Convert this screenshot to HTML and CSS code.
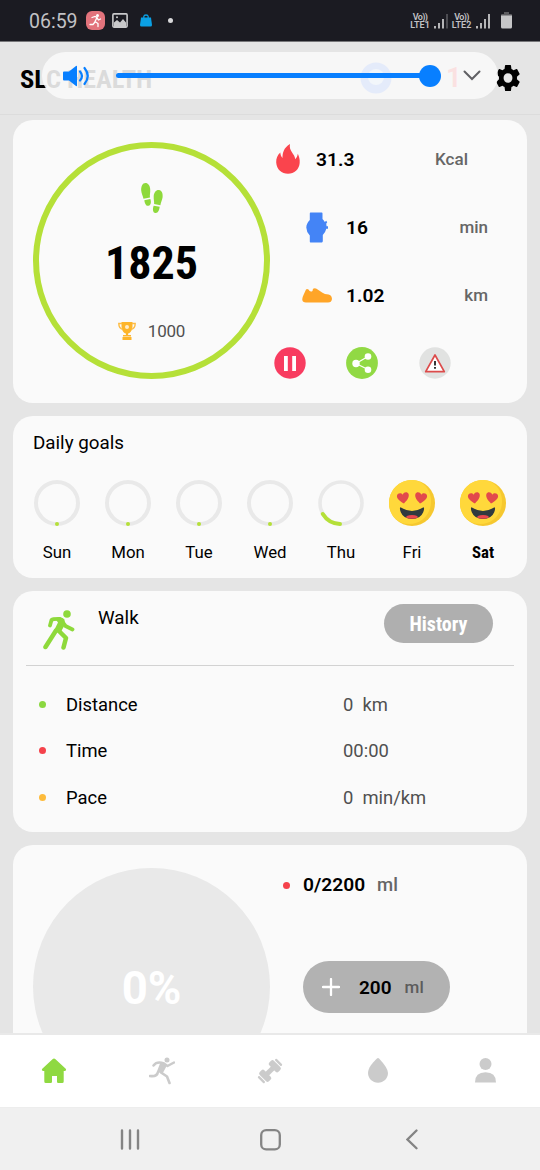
FILE: index.html
```html
<!DOCTYPE html>
<html lang="en">
<head>
<meta charset="utf-8">
<title>SLC Health</title>
<link rel="stylesheet" href="styles.css">
</head>
<body>
<div class="phone">
  <div class="status">
    <span class="clock">06:59</span>
    <svg class="status-app" width="19" height="19" viewBox="0 0 19 19"><rect width="19" height="19" rx="6" fill="#e2737c"/><circle cx="11.500" cy="4.500" r="1.500" fill="#fff"/><path d="M6 6.500l3-1 2 1-2 4 3 2v3M9 11l-2 2.500H4M11 7l1.500 2 2-1" fill="none" stroke="#fff" stroke-width="1.300" stroke-linecap="round"/></svg>
    <svg class="status-pic" width="16" height="15" viewBox="0 0 16 15"><rect x=".9" y=".9" width="14.200" height="13.200" rx="1" fill="none" stroke="#c9c9cb" stroke-width="1.600"/><path d="M2 14V9.500l3-2.500 3 2.500 3-3.500 3 3.500V14z" fill="#c9c9cb"/><circle cx="5" cy="4.300" r="1" fill="#c9c9cb"/></svg>
    <svg class="status-bag" width="12" height="13" viewBox="0 0 12 13"><path d="M1 3.500h10l1 7.500q0 1.500-1.500 1.500h-9Q0 12.500 0 11z" fill="#0ba0e4"/><path d="M3.800 4V2.500Q4 1 6 1t2.200 1.500V4" fill="none" stroke="#0ba0e4" stroke-width="1.300"/></svg>
    <span class="status-dot"></span>
    <span class="status-gap"></span>
    <span class="lte"><span class="vo">Vo))</span><span>LTE1</span></span>
    <svg class="bars" width="14" height="16" viewBox="0 0 14 16"><path d="M1 13v2.500M5 10v5.500M9 6v9.500" stroke="#d0d0d2" stroke-width="1.700"/><path d="M13 1v14.500" stroke="#55555b" stroke-width="1.700"/></svg>
    <span class="lte lte-two"><span class="vo">Vo))</span><span>LTE2</span></span>
    <svg class="bars" width="14" height="16" viewBox="0 0 14 16"><path d="M1 13v2.500M5 10v5.500M9 6v9.500M13 1v14.500" stroke="#d0d0d2" stroke-width="1.700"/></svg>
    <svg class="battery" width="11" height="17" viewBox="0 0 11 17"><path d="M3 0h5v2h2q1 0 1 1v2H0V3q0-1 1-1h2z" fill="#5c5c60"/><path d="M0 3.500h11V15q0 1.500-1.500 1.500h-8Q0 16.500 0 15z" fill="#c6c6c8"/></svg>
  </div>

  <div class="header">
    <span class="title narrow">SLC HEALTH</span>
    <span class="badge-blue"><svg width="32" height="32" viewBox="0 0 32 32"><circle cx="16" cy="16" r="15.500" fill="#4f83ff"/><circle cx="16" cy="15" r="8" fill="#b9d8ff"/></svg></span>
    <span class="badge-red">1</span>
    <svg class="gear" width="24" height="26" viewBox="2 2 20 20" preserveAspectRatio="none"><path d="M19.430 12.980c.04-.32.07-.64.07-.98s-.03-.66-.07-.98l2.110-1.650c.19-.15.24-.42.12-.64l-2-3.460c-.12-.22-.39-.3-.61-.22l-2.490 1c-.52-.4-1.080-.73-1.690-.98l-.38-2.650A.488.488 0 0014 2h-4c-.25 0-.46.18-.49.42l-.38 2.650c-.61.25-1.170.59-1.690.98l-2.490-1c-.23-.09-.49 0-.61.22l-2 3.460c-.13.22-.07.49.12.64l2.110 1.650c-.04.32-.07.65-.07.98s.03.66.07.98l-2.110 1.650c-.19.15-.24.42-.12.64l2 3.460c.12.22.39.3.61.22l2.490-1c.52.4 1.080.73 1.690.98l.38 2.650c.03.24.24.42.49.42h4c.25 0 .46-.18.49-.42l.38-2.650c.61-.25 1.170-.59 1.690-.98l2.490 1c.23.09.49 0 .61-.22l2-3.460c.12-.22.07-.49-.12-.64l-2.110-1.650zM12 15.700a3.700 3.700 0 110-7.400 3.700 3.700 0 010 7.400z"/></svg>
    <div class="volume">
      <svg class="speaker" width="27" height="22" viewBox="0 0 27 22"><path d="M1 6.500h5L13 1q1-.5 1 .5v19q0 1-1 .5L6 15.500H1q-1 0-1-1v-7q0-1 1-1z" fill="#087fff"/><path d="M17 6.500q4 4.500 0 9M21.500 3q6.500 8 0 16" fill="none" stroke="#087fff" stroke-width="2.200" stroke-linecap="round"/></svg>
      <div class="track"><span class="knob"></span></div>
      <svg class="chevron" width="18" height="11" viewBox="0 0 18 11"><path d="M1.500 1.500L9 9l7.500-7.500" fill="none" stroke="#606064" stroke-width="2" stroke-linecap="round"/></svg>
    </div>
  </div>

  <div class="content">
    <section class="card summary">
      <div class="ring">
        <svg class="steps" width="22" height="31" viewBox="0 0 22 31"><g fill="#8ed93b"><path d="M4.500 0C1.500 0 0 3.500.2 7.500c.2 3 1.500 5 2.300 8.300l6.500-1.300c-.5-2.500.5-5 .2-8.500C8.900 2.500 7 0 4.500 0z"/><path d="M3.300 17.200l6-1.200c1 2.500 1 6-1.800 6.800-2.500.6-3.800-2.600-4.200-5.600z"/><path d="M18 7c-3-.3-5 2.500-5.300 6-.2 3.500.7 5.500.4 8l6.300 1.200c.4-3 1.800-5 2.200-8C22 10.500 20.800 7.300 18 7z"/><path d="M12.700 22.700l6 1.100c-.4 3-1.500 6.500-4.300 6.200-2.900-.4-2.900-4.500-1.700-7.300z"/></g></svg>
        <span class="step-count narrow">1825</span>
        <span class="target"><svg width="18" height="18" viewBox="0 0 18 18"><path d="M3.500 0h11v4c0 4-2 7-4.400 7.400V13h2.900v1.500H5V13h2.900v-1.600C5.500 11 3.500 8 3.500 4zM4.500 15h9v3h-9z" fill="#fdb52b"/><path d="M4 1.500H.8Q.8 6.500 5 7.500M14 1.500h3.200q0 5-4.200 6" fill="none" stroke="#fdbc45" stroke-width="1.400"/><circle cx="9" cy="5" r="2" fill="#fff" opacity=".75"/></svg>1000</span>
      </div>
      <div class="metrics">
        <div class="metric metric-first"><span class="metric-icon"><svg width="24" height="30" viewBox="0 0 24 30"><path d="M14 0C7.500 4 6.500 9 6.500 14 5 12.500 4.500 10.500 4.300 8.500 1.500 11 0 14.500.2 18.500.7 25.500 5.700 29.800 12 29.800s11.200-4.300 11.700-11c.3-3.500-.7-6.500-1.900-9-.4 2.500-1.200 4-2.600 5.500C19 9.500 12.500 7.500 14 0z" fill="#fa444d"/></svg></span><b>31.3</b><em>Kcal</em></div>
        <div class="metric"><span class="metric-icon"><svg width="22" height="31" viewBox="0 0 22 31"><path d="M4.500.5h11.200q.8 0 .8 1V7q1.500 1.300 2.300 3l1.400-1.200 1 1.500-1 1.500q.3 1.300.3 2.500h1.500v2.400h-1.700q-.8 3.500-3.500 6.300v6q0 1-.9 1.500H4.500q-.7 0-.7-1v-6Q.3 19.500.3 15.500T3.800 8V1.500q0-1 .7-1z" fill="#4484f6"/></svg></span><b>16</b><em>min</em></div>
        <div class="metric"><span class="metric-icon"><svg width="30" height="15" viewBox="0 0 30 15"><path d="M4 1.500Q5 .3 6.500 1.500 8 4.500 10.500 3L11 .8q2-1 3.500 0l6 4q2 1.500 6 1.800 3 .3 3.500 4.400-.5 3.500-4 3.500H4Q.5 14.500.3 11.800 0 10 1.500 7z" fill="#ffa528"/></svg></span><b>1.02</b><em>km</em></div>
        <div class="actions">
          <svg width="32" height="32" viewBox="0 0 32 32"><circle cx="16" cy="16" r="15.700" fill="#f83c60"/><path d="M11.900 9v15M20.100 9v15" stroke="#fff" stroke-width="3.800"/></svg>
          <svg width="32" height="32" viewBox="0 0 32 32"><circle cx="16" cy="16" r="15.900" fill="#91d944"/><path d="M22 9.500L10 16.500l12 6" fill="none" stroke="#fff" stroke-width="1.200"/><g fill="#fff"><circle cx="22" cy="9.500" r="3.300"/><circle cx="10" cy="16.500" r="3.700"/><circle cx="22" cy="22.800" r="3.300"/></g></svg>
          <svg width="32" height="32" viewBox="0 0 32 32"><circle cx="16" cy="16" r="15.700" fill="#e1e2e1"/><path d="M16 8L25.300 24.700H6.700z" fill="#fff" stroke="#dc4b4b" stroke-width="1.700" stroke-linejoin="round"/><path d="M16 14v4.500M16 20v1.800" stroke="#222" stroke-width="1.800"/></svg>
        </div>
      </div>
    </section>

    <section class="card goals">
      <h2>Daily goals</h2>
      <div class="days">
        <div class="day"><span class="day-ring"></span>Sun</div>
        <div class="day"><span class="day-ring"></span>Mon</div>
        <div class="day"><span class="day-ring"></span>Tue</div>
        <div class="day"><span class="day-ring"></span>Wed</div>
        <div class="day"><svg width="46" height="46" viewBox="0 0 46 46"><circle cx="23" cy="23" r="21" fill="none" stroke="#e9e9e9" stroke-width="3.600"/><path d="M22 44A21 21 0 014.800 34" fill="none" stroke="#b5e038" stroke-width="4" stroke-linecap="round"/></svg>Thu</div>
        <div class="day"><svg width="46" height="46" viewBox="0 0 46 46"><circle cx="23" cy="23" r="23" fill="#f6c82f"/><path d="M23 0C10 0 0 10 0 23s9 21 20 21c13 0 22-10 22-23C42 12 37 4 29 1Q26 0 23 0z" fill="#ffd83b"/><path d="M15 23.400C11 21.500 7.300 18.500 8 15.500c.7-2.600 4-3.200 5.800-.8 1-3 4.800-3.200 5.800-.6 1 3-1.900 7-4.600 9.300z" fill="#e2494c"/><path d="M31 23.400c-2.700-2.300-5.600-6.300-4.600-9.300 1-2.600 4.800-2.400 5.800.6 1.800-2.400 5.100-1.800 5.800.8.700 3-3 6-7 7.900z" fill="#e2494c"/><path d="M11.500 27.300Q23 34.500 34.500 27.300q1.300 1-.3 5Q31.500 39 23 39t-11.200-6.700q-1.600-4-.3-5z" fill="#303a3f"/><path d="M17 37.500q0-2.500 6-2.500t6 2.500q-6 2.500-12 0z" fill="#e9474d"/></svg>Fri</div>
        <div class="day"><svg width="46" height="46" viewBox="0 0 46 46"><circle cx="23" cy="23" r="23" fill="#f6c82f"/><path d="M23 0C10 0 0 10 0 23s9 21 20 21c13 0 22-10 22-23C42 12 37 4 29 1Q26 0 23 0z" fill="#ffd83b"/><path d="M15 23.400C11 21.500 7.300 18.500 8 15.500c.7-2.600 4-3.200 5.800-.8 1-3 4.800-3.200 5.800-.6 1 3-1.900 7-4.600 9.300z" fill="#e2494c"/><path d="M31 23.400c-2.700-2.300-5.600-6.300-4.600-9.300 1-2.600 4.800-2.400 5.800.6 1.800-2.400 5.100-1.800 5.800.8.700 3-3 6-7 7.900z" fill="#e2494c"/><path d="M11.500 27.300Q23 34.500 34.500 27.300q1.300 1-.3 5Q31.500 39 23 39t-11.200-6.700q-1.600-4-.3-5z" fill="#303a3f"/><path d="M17 37.500q0-2.500 6-2.500t6 2.500q-6 2.500-12 0z" fill="#e9474d"/></svg><span class="today narrow">Sat</span></div>
      </div>
    </section>

    <section class="card walk">
      <div class="walk-head">
        <svg width="32" height="40" viewBox="0 0 32 40"><circle cx="24" cy="4" r="3.800" fill="#8ed93b"/><path d="M7 15.500L8.500 10Q10 8.800 17 9M18 10L22.500 16l7 3.500" fill="none" stroke="#8ed93b" stroke-width="3.800" stroke-linecap="round" stroke-linejoin="round"/><path d="M12 8.500Q19 6 21.500 9.500l.5 5-4.500 8-6.500-2 4-8z" fill="#8ed93b"/><path d="M13 20.500L2.500 37M16 21l7 7-2.500 9.500" fill="none" stroke="#8ed93b" stroke-width="4.500" stroke-linecap="round" stroke-linejoin="round"/></svg>
        <span class="walk-name">Walk</span>
        <span class="history"><span class="narrow">History</span></span>
      </div>
      <div class="stat"><i class="dot green"></i><span>Distance</span><span class="value">0&nbsp; km</span></div>
      <div class="stat"><i class="dot red"></i><span>Time</span><span class="value">00:00</span></div>
      <div class="stat"><i class="dot amber"></i><span>Pace</span><span class="value">0&nbsp; min/km</span></div>
    </section>

    <section class="card water">
      <div class="water-disc">0%</div>
      <div class="water-side">
        <div class="water-total"><i class="dot red"></i><b>0/2200</b><em>ml</em></div>
        <div class="water-add"><svg width="18" height="18" viewBox="0 0 18 18"><path d="M9 1v16M1 9h16" stroke="#fff" stroke-width="2.300" stroke-linecap="round"/></svg><b>200</b><em>ml</em></div>
      </div>
    </section>
  </div>

  <nav class="tabs">
    <span><svg width="26" height="26" viewBox="0 0 26 26"><path d="M11.500 1.200Q13 0 14.500 1.200L25 11q.6 1.500-1 2h-1.300v10.500q0 1.500-1.500 1.500h-4q-1.200 0-1.200-1.200V18h-5v5.800Q11 25 9.800 25h-5q-1.500 0-1.500-1.500V13H2q-1.700-.5-1-2z" fill="#8fd941"/></svg></span>
    <span><svg width="26" height="28" viewBox="0 0 26 28"><circle cx="18" cy="3" r="2.500" fill="#cbcbcb"/><path d="M4.500 8.500Q8 4 15 6.500L18.500 9 25 5.500" fill="none" stroke="#cbcbcb" stroke-width="2.500" stroke-linecap="round" stroke-linejoin="round"/><path d="M12 6l5 2.500-4 7.500-4-2z" fill="#cbcbcb" stroke="#cbcbcb" stroke-width="1.500"/><path d="M9 15q-1 5-8 4M12 15.500l6 4 2.500 6.500" fill="none" stroke="#cbcbcb" stroke-width="2.600" stroke-linecap="round" stroke-linejoin="round"/></svg></span>
    <span><svg width="26" height="26" viewBox="0 0 26 26"><g transform="rotate(-45 13 13)" fill="#cbcbcb"><rect x="8" y="10.500" width="10" height="5"/><rect x="3" y="6.500" width="6.500" height="13" rx="2"/><rect x="16.500" y="6.500" width="6.500" height="13" rx="2"/><rect x="-.3" y="8.500" width="2.300" height="9" rx="1"/><rect x="24" y="8.500" width="2.300" height="9" rx="1"/></g></svg></span>
    <span><svg width="20" height="25" viewBox="0 0 20 25"><path d="M8.700.7Q10-.6 11.300.7 20 10 20 15c0 5.500-4.500 9.700-10 9.700S0 20.500 0 15C0 10 4 5.500 8.700.7z" fill="#cbcbcb"/></svg></span>
    <span><svg width="21" height="25" viewBox="0 0 21 25"><circle cx="10.500" cy="6" r="6" fill="#cbcbcb"/><path d="M0 24.500q0-10.200 10.500-10.200T21 24.500z" fill="#cbcbcb"/></svg></span>
  </nav>
  <div class="sysnav">
    <svg width="20" height="21" viewBox="0 0 20 21"><path d="M2 1.500v18M10 1.500v18M18 1.500v18" stroke="#848484" stroke-width="2.400" stroke-linecap="round"/></svg>
    <svg width="21" height="22" viewBox="0 0 21 22"><rect x="1.200" y="1.200" width="18.600" height="19.200" rx="5" fill="none" stroke="#848484" stroke-width="2.300"/></svg>
    <svg width="12" height="21" viewBox="0 0 12 21"><path d="M10.500 1.500L1.500 10.500l9 8.800" fill="none" stroke="#848484" stroke-width="2.300" stroke-linecap="round"/></svg>
  </div>
</div>
</body>
</html>
```
FILE: styles.css
```css
* { box-sizing: border-box; }
body { margin: 0; font-family: Roboto, "Liberation Sans", sans-serif; color: #000; background: #e5e5e5; }
svg { display: block; flex: none; }
b { font-weight: 600; }
em { font-style: normal; font-weight: 500; color: #666; }
.phone { width: 540px; height: 1170px; display: flex; flex-direction: column; overflow: hidden; }
.narrow { font-family: "Roboto Condensed", Roboto, sans-serif; font-weight: 700; font-stretch: condensed; white-space: nowrap; }

.status { height: 42px; flex: none; background: #1b1b22; border-bottom: 1px solid #77777a; display: flex; align-items: center; padding: 0 28px 0 29px; color: #c2c2c5; }
.clock { font-size: 19.500px; width: 57px; padding-top: 1px; }
.status-pic { margin-left: 7px; }
.status-bag { margin-left: 12px; }
.status-dot { width: 5px; height: 5px; border-radius: 50%; background: #d8d8da; margin-left: 16px; }
.status-gap { flex: 1; }
.lte { display: flex; flex-direction: column; align-items: center; font-size: 9px; line-height: 8px; font-weight: 600; width: 20px; white-space: nowrap; }
.vo { letter-spacing: -.6px; }
.lte-two { margin-left: 3px; width: 21px; }
.bars { margin-left: 4px; }
.battery { margin-left: 11px; }

.header { position: relative; height: 73px; flex: none; display: flex; align-items: center; padding-left: 20px; border-bottom: 1px solid #dcdcdc; }
.title { font-size: 26.500px; width: 340px; letter-spacing: -.1px; }
.badge-red { margin-left: 54px; width: 23px; font-size: 27px; font-weight: 700; color: #f33; }
.gear { margin-left: 27px; }
.volume { position: absolute; left: 42px; top: 10px; width: 456px; height: 47px; border-radius: 24px; background: rgba(249, 249, 249, .88); display: flex; align-items: center; padding: 0 17px 0 21px; }
.track { width: 322px; height: 5px; margin-left: 26px; border-radius: 3px; background: #087fff; display: flex; align-items: center; justify-content: flex-end; }
.knob { flex: none; width: 22px; height: 22px; border-radius: 50%; background: #087fff; margin-right: -3px; }
.chevron { margin-left: 25px; }

.content { flex: 1; min-height: 0; overflow: hidden; padding: 5px 13px 0; display: flex; flex-direction: column; gap: 13px; border-bottom: 2px solid #e9e9e9; }
.card { flex: none; background: #fafafa; border-radius: 20px; }

.summary { height: 283px; display: flex; padding: 22px 0 0 20px; }
.ring { width: 237px; height: 237px; border-radius: 50%; border: 6px solid #b5e038; display: flex; flex-direction: column; align-items: center; padding-top: 35px; }
.step-count { font-size: 46px; line-height: 54px; margin-top: 22px; }
.target { display: flex; align-items: center; gap: 12px; font-size: 17px; line-height: 20px; color: #505050; margin-top: 31px; letter-spacing: -.2px; }
.metrics { margin: -17px 0 0 4px; }
.metric { height: 68.200px; width: 214px; display: flex; align-items: center; font-size: 19.200px; }
.metric-icon { width: 86px; display: flex; justify-content: center; }
.metric b { width: 90px; margin-left: -14px; }
.metric em { margin-left: auto; font-size: 17px; }
.metric-first { width: 194px; }
.metric-first .metric-icon { width: 28px; }
.metric-first b { margin-left: 14px; }
.actions { display: flex; gap: 40.500px; margin: 17px 0 0 -.5px; }

.goals { height: 161.500px; padding: 0 20px; overflow: hidden; }
.goals h2 { margin: 16px 0 0; font-size: 18.800px; line-height: 22px; font-weight: 400; }
.days { display: flex; justify-content: space-between; margin: 26px -10px 0; }
.day { width: 68px; display: flex; flex-direction: column; align-items: center; gap: 16px; font-size: 16.800px; line-height: 20px; }
.day-ring { width: 46px; height: 46px; border: 4px solid #e9e9e9; border-radius: 50%; display: flex; align-items: flex-end; justify-content: center; }
.day-ring::after { content: ""; width: 4px; height: 4px; border-radius: 50%; background: #b5e038; margin-bottom: -4px; }

.walk { height: 241px; margin-top: .5px; }
.walk-head { height: 75px; margin: 0 13px 15px; border-bottom: 1px solid #d2d2d2; display: flex; align-items: flex-start; padding-left: 17px; font-size: 18.800px; }
.walk-head svg { margin-top: 19px; }
.walk-name { margin: 16px 0 0 23px; line-height: 22px; }
.history { margin: 13px 21px 0 auto; width: 109px; height: 39px; border-radius: 20px; background: #afafaf; color: #fff; display: flex; align-items: center; justify-content: center; font-size: 20px; }
.stat { height: 46.500px; display: flex; align-items: center; padding-left: 26px; font-size: 18.400px; }
.stat span { flex: none; width: 257px; margin-left: 20px; }
.stat .value { width: 120px; color: #505050; }
.dot { flex: none; width: 7px; height: 7px; border-radius: 50%; }
.green { background: #8bd840; }
.red { background: #f5424b; }
.amber { background: #fdbb3b; }

.water { height: 283px; display: flex; padding: 23px 0 0 20px; }
.water-disc { width: 237px; height: 237px; border-radius: 50%; background: #e9e9e9; color: #fff; font-size: 45.500px; font-weight: 700; display: flex; align-items: center; justify-content: center; padding-top: 3px; }
.water-side { margin: 6px 0 0 13px; }
.water-total { display: flex; align-items: center; font-size: 19.200px; line-height: 22px; }
.water-total b { margin-left: 13px; }
.water-total em { margin-left: 12px; font-size: 18.500px; }
.water-add { margin: 65px 0 0 20px; width: 147px; height: 52px; border-radius: 26px; background: #b2b2b2; display: flex; align-items: center; padding-left: 19px; font-size: 19px; }
.water-add b { margin-left: 19px; }
.water-add em { margin-left: 13px; font-size: 17px; color: #5c5c5c; }

.tabs { height: 72px; flex: none; background: #fff; display: flex; }
.tabs span { flex: 1; display: flex; align-items: center; justify-content: center; }
.tabs svg { margin: -1px 1px 0 0; }
.sysnav { height: 63px; flex: none; background: #f0f0f0; border-top: 1px solid #ededed; display: flex; align-items: center; padding: 1px 0 0 120px; }
.sysnav svg + svg { margin-left: 120px; }
.sysnav svg:last-child { margin-left: 125px; }
```
